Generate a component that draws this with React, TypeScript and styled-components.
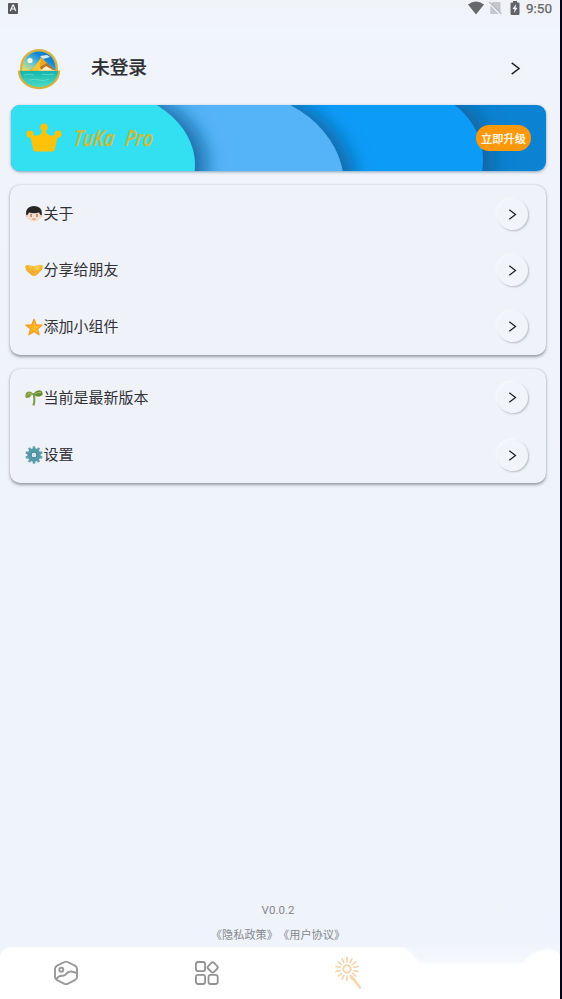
import React from "react";
import styled, { createGlobalStyle } from "styled-components";

const Global = createGlobalStyle`
  * { box-sizing: border-box; }
  body { margin: 0; background: #030319; }
  svg { display: block; flex: none; }
`;

const Screen = styled.div`
  width: 560px;
  height: 999px;
  display: flex;
  flex-direction: column;
  overflow: hidden;
  background: linear-gradient(#f0f2f7 0, #f1f5fc 30px, #f0f3f9 85px, #eff3fb 100%);
  color: #303136;
  font-family: Roboto, "Noto Sans CJK SC", sans-serif;
`;

const StatusBar = styled.div`
  height: 18px;
  padding: 0 8px 2px;
  display: flex;
  align-items: center;
  justify-content: space-between;
`;

const StatusIcons = styled.div`
  display: flex;
  align-items: center;
`;

const Clock = styled.span`
  margin-left: 6px;
  font-size: 13.5px;
  line-height: 16px;
  color: #646669;
  -webkit-text-stroke: 0.25px #646669;
`;

const Profile = styled.div`
  height: 87px;
  padding: 13px 38px 0 17px;
  display: flex;
  align-items: center;
`;

const UserName = styled.h1`
  flex: 1;
  margin: 0 0 0 30px;
  font-size: 18.7px;
  line-height: 26px;
  font-weight: 500;
  color: #2d2e32;
  -webkit-text-stroke: 0.2px #2d2e32;
`;

const AvatarSlot = styled.div`
  margin-top: 2px;
`;

const Banner = styled.section`
  position: relative;
  width: 535px;
  height: 66px;
  margin-left: 10.5px;
  padding: 0 14.5px;
  display: flex;
  align-items: center;
  border-radius: 9px;
  overflow: hidden;
  box-shadow: 0 1px 3px #7ba0ba;
`;

const Waves = styled.svg`
  position: absolute;
  inset: 0;
`;

const BannerTitle = styled.span`
  position: relative;
  flex: 1;
  margin: 0 0 3px 12.5px;
  color: #c9bd3c;
  font: italic 600 22px/26px "Open Sans", sans-serif;
  word-spacing: 8px;
  -webkit-text-stroke: 0.2px #c9bd3c;
  transform: scaleX(0.81) skewX(-8deg);
  transform-origin: left center;
`;

const Upgrade = styled.button`
  position: relative;
  width: 55px;
  height: 26px;
  padding: 0;
  border: 0;
  border-radius: 13px;
  background: #ff980b;
  color: #fff9e8;
  font: 500 11.2px/26px "Noto Sans CJK SC", sans-serif;
  -webkit-text-stroke: 0.2px #fff9e8;
`;

const Card = styled.section<{ $height: number }>`
  flex: none;
  width: 536px;
  height: ${(p) => p.$height}px;
  margin: 14px 0 0 10px;
  padding: 1px 18px 0 15px;
  display: flex;
  flex-direction: column;
  border-radius: 10px;
  background: #eff2f9;
  box-shadow: 0 1.5px 3px rgba(70, 75, 85, 0.5), 0 0 1px rgba(90, 95, 105, 0.25);
`;

const Row = styled.div<{ $height: number }>`
  flex: none;
  height: ${(p) => p.$height}px;
  display: flex;
  align-items: center;
`;

const RowLabel = styled.span`
  flex: 1;
  padding-left: 0.5px;
  font-size: 15px;
  line-height: 22px;
`;

const RoundButton = styled.button`
  width: 31px;
  height: 31px;
  padding: 0;
  border: 0;
  border-radius: 50%;
  display: grid;
  place-items: center;
  background: #f1f4fa;
  box-shadow: 1px 1px 2px rgba(80, 85, 95, 0.35), -1px -1px 2px rgba(255, 255, 255, 0.8);
`;

const Footer = styled.footer`
  margin-top: auto;
  width: 556px;
  text-align: center;
  color: #85878b;
  line-height: 25px;
`;

const Version = styled.div`
  font-size: 11.5px;
`;

const Legal = styled.div`
  height: 24px;
  line-height: 26px;
  display: flex;
  justify-content: center;
  font-size: 11.2px;
`;

const Nav = styled.nav`
  position: relative;
  height: 52px;
  padding-left: 53px;
  display: flex;
  align-items: center;
  background: #fff;
  border-radius: 11px 11px 0 0;
`;

const NavItem = styled.div<{ $gap?: number }>`
  margin-left: ${(p) => p.$gap ?? 0}px;
`;

const Notch = styled.svg`
  position: absolute;
  left: 380px;
  top: -6px;
`;

const Chevron = ({ size = 11 }: { size?: number }) => (
  <svg width={size} height={size} viewBox="0 0 12 12" fill="none" stroke="#1c1d24" strokeWidth="1.3">
    <path d="M2.5 .8 9.3 6 2.5 11.2" />
  </svg>
);

const Avatar = () => (
  <svg width="44" height="42" viewBox="0 0 44 42">
    <defs>
      <linearGradient id="sky" x1="0" y1="1" x2="1" y2="0">
        <stop offset="0" stopColor="#f6e35b" />
        <stop offset=".35" stopColor="#69c5d0" />
        <stop offset=".65" stopColor="#1688d8" />
        <stop offset="1" stopColor="#0873c9" />
      </linearGradient>
      <linearGradient id="sea" x1="0" y1="0" x2="0" y2="1">
        <stop stopColor="#16b5ae" />
        <stop offset="1" stopColor="#4adcc6" />
      </linearGradient>
    </defs>
    <path d="M3 23V20a19 19 0 0 1 38 0v3Z" fill="#d7b447" />
    <path d="M5.5 23v-3a16.5 16.5 0 0 1 33 0v3Z" fill="url(#sky)" />
    <path d="m12 23 8-6 4-8 5 5 9 9Z" fill="#eaa722" />
    <path d="m14 23 10-13-1 7 2 6Z" fill="#f5c72f" />
    <path d="m21 23 8-6 5 3 4 3Z" fill="#fff0c3" />
    <path d="m23 19 7-4 8 7-3-.5-6-3.500-5 4Z" fill="#b8741f" />
    <path d="m23 8 7-1 3 2-7 2Z" fill="#dce9ea" />
    <circle cx="13" cy="12.500" r="2.600" fill="#fcffe4" />
    <path d="M.8 22.500h42.400a21.200 18.700 0 0 1-42.400 0Z" fill="#d5b13c" />
    <path d="M3 23h38a19 16 0 0 1-38 0Z" fill="url(#sea)" />
    <path d="M7 27q5-1.500 10 0M25 26.500h12M12 32q6-1.500 10 0t10-1" fill="none" stroke="#94f2dc" strokeWidth=".8" opacity=".5" />
  </svg>
);

const Crown = () => (
  <svg width="36" height="30" viewBox="0 0 36 30" fill="#ffc20b">
    <circle cx="18" cy="4.200" r="3.800" />
    <circle cx="4" cy="11" r="3.600" />
    <circle cx="32" cy="11" r="3.600" />
    <path d="M3 12 6 11.500q5.500 3 9.500-1.200L16.500 5h3l1 5.300Q24.500 14.500 30 11.500l3 .5-2 4-2.200 10.500Q28.500 28.500 26.500 28.500H9.500Q7.500 28.500 7.200 26.500L5 16Z" />
  </svg>
);

const CrownSlot = styled.div`
  position: relative;
  margin-left: 0.5px;
`;

const Person = () => (
  <svg width="18" height="18" viewBox="0 0 18 18">
    <ellipse cx="9" cy="10" rx="7.200" ry="6.700" fill="#f8dfcb" />
    <circle cx="2" cy="11" r="1.400" fill="#f1cbb3" />
    <circle cx="16" cy="11" r="1.400" fill="#f1cbb3" />
    <path d="M1.300 10.300C.2 4.500 3.500 1 9 1s8.800 3.500 7.700 9.300l-1.400-.5-1.300-2.300Q9 8.800 4 7.500L2.700 9.800Z" fill="#282525" />
    <path d="M5 9.400h2M11 9.400h2" stroke="#6b4c3e" strokeWidth=".6" />
    <circle cx="6" cy="11" r=".8" fill="#554338" />
    <circle cx="12" cy="11" r=".8" fill="#554338" />
    <path d="M6.800 13.800h4.400q-2.200 1.800-4.400 0" fill="#c46552" />
  </svg>
);

const Handshake = () => (
  <svg width="18" height="18" viewBox="0 0 18 18">
    <path d="m0 4.800 3-.8 5.500 1.200L15 4l3 .8-.8 3.700-5 5.300Q9 16 6.500 14.200L1.200 9.500Z" fill="#f3b331" />
    <path d="m3.500 4.800 4.700 1.200 4.300-1.300 3 .5-1.500 3.500-3 1.200-3-2-2.500 1Z" fill="#fbca46" />
    <path d="m5 8.200 3-1.500 4.500 4M4 10.200l4 3.600M6.500 9.200l3.800 3.500" fill="none" stroke="#e39a2a" strokeWidth=".6" />
  </svg>
);

const Star = () => (
  <svg width="18" height="18" viewBox="0 0 18 18">
    <path d="m9 1.200 2.200 5.600 6 .3-4.700 3.800 1.600 5.900L9 13.500l-5.100 3.300 1.600-5.900L.8 7.100l6-.3Z" fill="#ffb31e" stroke="#f79a20" strokeWidth="1.200" strokeLinejoin="round" />
    <path d="m9 3 1.200 5.200L15 8.500l-4 2 .5 3.500L9 12Z" fill="#ffc12e" />
  </svg>
);

const Sprout = () => (
  <svg width="18" height="18" viewBox="0 0 18 18">
    <path d="M8 4.500q1.500 2 1.400 6 0 3-1 6" fill="none" stroke="#7b9b42" strokeWidth="2" />
    <path d="M9 6Q6.500 1.300 1.800 3-.6 6 .8 9q4.400.4 6-3.500Z" fill="#839f40" />
    <path d="M8.500 5.500Q10 1.200 15 1.200 18.200 2.200 17.600 6 12.500 9.500 8.500 5.500" fill="#688c39" />
    <path d="M2 5.500q2.500-1.500 5-.5M10 5q3-2.200 6-1.500" fill="none" stroke="#a8b95a" />
  </svg>
);

const Gear = () => (
  <svg width="18" height="18" viewBox="0 0 18 18">
    {Array.from({ length: 10 }, (_, i) => (
      <rect key={i} x="7.700" y=".3" width="2.600" height="5" rx=".6" fill="#659fac" transform={`rotate(${i * 36} 9 9)`} />
    ))}
    <circle cx="9" cy="9" r="4.700" fill="none" stroke="#539ba8" strokeWidth="4" />
    <circle cx="9" cy="9" r="2.900" fill="none" stroke="#438594" strokeWidth="1" />
    <circle cx="9" cy="9" r="1.900" fill="#d3e4ed" />
  </svg>
);

const ImageIcon = () => (
  <svg width="26" height="26" viewBox="0 0 26 26" fill="none" stroke="#989898" strokeWidth="1.900" strokeLinejoin="round">
    <path d="m11.500 2-7.400 3.600Q2 6.700 2 9v8q0 2 2.100 3.200l7.400 3.600q1.500.7 3 0l7.400-3.600Q24 19 24 17V9q0-2.300-2.100-3.400L14.500 2q-1.500-.7-3 0Z" />
    <circle cx="8.300" cy="9.700" r="2" />
    <path d="M3 19.500q2.500-4 6.500-3.800 2.500.2 4-2.200 3.500-3.700 10-.3" />
  </svg>
);

const GridIcon = () => (
  <svg width="26" height="26" viewBox="0 0 26 26" fill="none" stroke="#929292" strokeWidth="1.800">
    <rect x="1.900" y="2" width="9.200" height="9.200" rx="2.300" />
    <rect x="1.900" y="14.800" width="9.200" height="9.200" rx="2.300" />
    <rect x="14.500" y="14.800" width="9.200" height="9.200" rx="2.300" />
    <rect x="14.600" y="3.300" width="8.200" height="8.200" rx="1.900" transform="rotate(45 18.700 7.400)" />
  </svg>
);

const Wand = () => (
  <svg width="30" height="34" viewBox="0 0 30 34" fill="none" stroke="#f9d3ac" strokeWidth="1.700" strokeLinecap="round">
    <circle cx="13" cy="13" r="3.700" strokeWidth="2" />
    {Array.from({ length: 14 }, (_, i) => (
      <path key={i} d="M13 5.900V1.700" transform={`rotate(${(i * 360) / 14} 13 13)`} />
    ))}
    <path d="m17.500 20.500 8.500 11" strokeWidth="2.500" />
  </svg>
);

const BannerWaves = () => (
  <Waves width="536" height="66" viewBox="0 0 536 66">
    <defs>
      <filter id="shade" x="-20%" y="-20%" width="150%" height="140%">
        <feDropShadow dx="12" dy="0" stdDeviation="9" floodColor="#09659f" floodOpacity=".85" />
      </filter>
    </defs>
    <rect width="536" height="66" fill="#0c82d2" />
    <g filter="url(#shade)"><path d="M250-17h142a80 72 0 0 1 0 144H250Z" fill="#0f9bf8" /></g>
    <g filter="url(#shade)"><path d="M120-16h93a120 96 0 0 1 0 192h-93Z" fill="#55b4f7" /></g>
    <g filter="url(#shade)"><path d="M-60-16H84a100 76 0 0 1 0 152H-60Z" fill="#30e0f2" /></g>
  </Waves>
);

const groups = [
  { height: 170, rows: [
    { icon: <Person />, label: "关于", height: 56 },
    { icon: <Handshake />, label: "分享给朋友", height: 56 },
    { icon: <Star />, label: "添加小组件", height: 57 },
  ] },
  { height: 114, rows: [
    { icon: <Sprout />, label: "当前是最新版本", height: 55 },
    { icon: <Gear />, label: "设置", height: 60 },
  ] },
];

export default function App() {
  return (
    <Screen>
      <Global />
      <StatusBar>
        <svg width="10" height="11" viewBox="0 0 10 11">
          <rect width="10" height="11" rx="1" fill="#58595c" />
          <path d="m2.300 8 2.500-6h.6L7.700 8M3.300 6h3.600" fill="none" stroke="#f3f5f8" strokeWidth="1.200" />
        </svg>
        <StatusIcons>
          <svg width="16" height="14" viewBox="0 0 16 14"><path d="M0 3.500Q8-2.500 16 3.500L8 13.500Z" fill="#66686b" /></svg>
          <svg width="26" height="14" viewBox="0 0 26 14">
            <path d="m9 1h7.500v10.500L7 2.800ZM6.300 4.200 14.500 13H6.300Z" fill="#c4c6ca" />
            <path d="m5.500 1 12 12" stroke="#b5b7ba" strokeWidth="1.100" />
          </svg>
          <svg width="10" height="14" viewBox="0 0 10 14">
            <path d="M3 0h4v1.500h1.300Q9.500 1.500 9.500 2.500v10q0 1.500-1.200 1.500H1.700Q.5 14 .5 12.500v-10q0-1 1.200-1H3Z" fill="#626467" />
            <path d="M6 3 2.500 8H4.600L4 12l3.500-5.200H5.500Z" fill="#f4f6fa" />
          </svg>
          <Clock>9:50</Clock>
        </StatusIcons>
      </StatusBar>
      <Profile>
        <AvatarSlot><Avatar /></AvatarSlot>
        <UserName>未登录</UserName>
        <Chevron size={13} />
      </Profile>
      <Banner>
        <BannerWaves />
        <CrownSlot><Crown /></CrownSlot>
        <BannerTitle>TuKa Pro</BannerTitle>
        <Upgrade>立即升级</Upgrade>
      </Banner>
      {groups.map((group) => (
        <Card key={group.height} $height={group.height}>
          {group.rows.map((row) => (
            <Row key={row.label} $height={row.height}>
              {row.icon}
              <RowLabel>{row.label}</RowLabel>
              <RoundButton aria-label={row.label}><Chevron /></RoundButton>
            </Row>
          ))}
        </Card>
      ))}
      <Footer>
        <Version>V0.0.2</Version>
        <Legal><span>《隐私政策》</span><span>《用户协议》</span></Legal>
      </Footer>
      <Nav>
        <NavItem><ImageIcon /></NavItem>
        <NavItem $gap={115}><GridIcon /></NavItem>
        <NavItem $gap={114}><Wand /></NavItem>
        <Notch width="180" height="30" viewBox="0 0 180 30">
          <defs>
            <filter id="soft" x="-10%" y="-30%" width="120%" height="160%"><feGaussianBlur stdDeviation="1.200" /></filter>
            <linearGradient id="notch" x1="0" y1="0" x2="0" y2="1"><stop stopColor="#f0f3fa" /><stop offset="1" stopColor="#f6f8fe" /></linearGradient>
          </defs>
          <path d="M20 5Q29 8 40 22H143Q154 8 168 8L182 12V0H20Z" fill="url(#notch)" filter="url(#soft)" />
        </Notch>
      </Nav>
    </Screen>
  );
}
